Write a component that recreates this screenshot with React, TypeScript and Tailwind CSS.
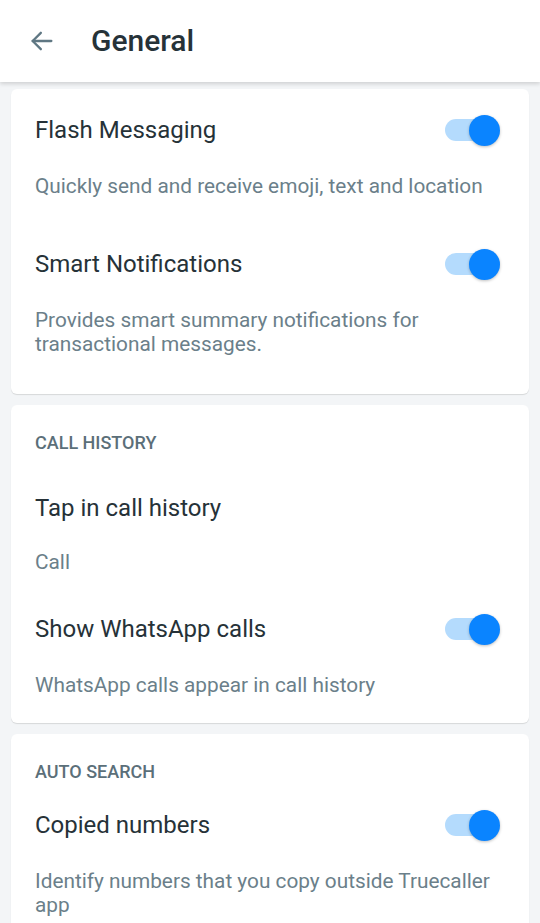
import React from "react";

function Toggle() {
  return (
    <div className="relative w-[56px] h-[32px] mr-[5px] shrink-0 flex items-center">
      <div className="absolute left-[1px] right-[3px] h-[22px] rounded-full bg-[#b4dbfd]" />
      <div className="absolute right-0 w-[31px] h-[31px] rounded-full bg-[#0a84ff] shadow-[0_1px_3px_rgba(0,0,0,0.25)]" />
    </div>
  );
}

function SettingRow(props: { title: string; subtitle: string; toggle?: boolean }) {
  const { title, subtitle, toggle } = props;
  return (
    <div>
      <div className="flex items-center justify-between h-[32px]">
        <span className="text-[24px] text-[#263238] leading-none">{title}</span>
        {toggle && <Toggle />}
      </div>
      <p className={`${toggle ? "mt-[28px]" : "mt-[26px]"} text-[20.8px] leading-[24px] text-[#6b7f8a]`}>
        {subtitle}
      </p>
    </div>
  );
}

export default function App() {
  return (
    <div
      className="w-[540px] h-[923px] overflow-hidden bg-[#f3f5f7]"
      style={{ fontFamily: "Roboto, 'Noto Sans', sans-serif" }}
    >
      <header className="relative z-10 h-[82px] bg-white flex items-center shadow-[0_2px_4px_rgba(0,0,0,0.15)]">
        <svg
          className="ml-[28px]"
          width={28}
          height={28}
          viewBox="0 0 24 24"
          fill="none"
          stroke="#5f7783"
          strokeWidth={2}
          strokeLinecap="round"
          strokeLinejoin="round"
        >
          <path d="M20 12H4" />
          <path d="M11 5l-7 7 7 7" />
        </svg>
        <h1 className="ml-[35px] text-[30px] font-medium text-[#263238] leading-none">General</h1>
      </header>

      <div className="px-[11px] pt-[7px] flex flex-col gap-[11px]">
        <section className="bg-white rounded-[6px] shadow-[0_1px_1px_rgba(0,0,0,0.12)] px-[24px] pt-[25px] pb-[38px] flex flex-col gap-[50px]">
          <SettingRow
            title="Flash Messaging"
            subtitle="Quickly send and receive emoji, text and location"
            toggle
          />
          <SettingRow
            title="Smart Notifications"
            subtitle="Provides smart summary notifications for transactional messages."
            toggle
          />
        </section>

        <section className="bg-white rounded-[6px] shadow-[0_1px_1px_rgba(0,0,0,0.12)] px-[24px] pt-[28px] pb-[26px]">
          <h2 className="text-[18px] font-medium text-[#5b6f79] leading-[20px]">CALL HISTORY</h2>
          <div className="mt-[39px] flex flex-col gap-[39px]">
            <SettingRow title="Tap in call history" subtitle="Call" />
            <SettingRow
              title="Show WhatsApp calls"
              subtitle="WhatsApp calls appear in call history"
              toggle
            />
          </div>
        </section>

        <section className="bg-white rounded-[6px] shadow-[0_1px_1px_rgba(0,0,0,0.12)] px-[24px] pt-[28px] pb-[40px]">
          <h2 className="text-[18px] font-medium text-[#5b6f79] leading-[20px]">AUTO SEARCH</h2>
          <div className="mt-[27px]">
            <SettingRow
              title="Copied numbers"
              subtitle="Identify numbers that you copy outside Truecaller app"
              toggle
            />
          </div>
        </section>
      </div>
    </div>
  );
}
